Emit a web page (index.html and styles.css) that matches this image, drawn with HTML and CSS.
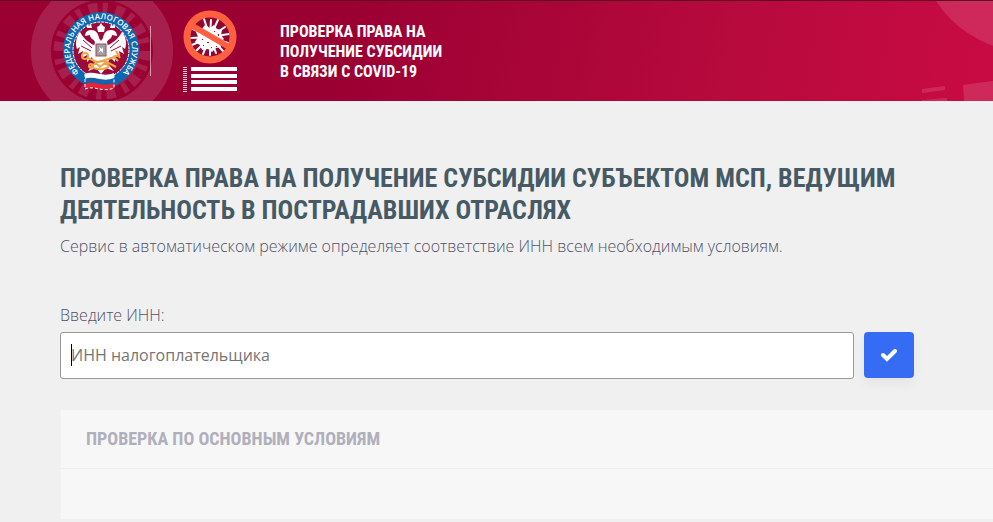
FILE: index.html
```
<!DOCTYPE html>
<html lang="ru">
<head>
    <meta charset="UTF-8">
    <meta name="viewport" content="width=device-width, initial-scale=1.0">
    <title>Проверка права на получение субсидии</title>
    <link rel="stylesheet" href="styles.css">
</head>
<body>
    <header class="header">
        <!-- Background shapes -->
        <svg class="decor decor-left" width="144" height="144" viewBox="0 0 144 144" aria-hidden="true">
            <g fill="none" stroke="#fff">
                <circle cx="72" cy="72" r="61" stroke-width="20"/>
                <circle cx="72" cy="72" r="43" stroke-width="11" stroke-dasharray="9 5 5 8"/>
            </g>
            <circle cx="72" cy="72" r="38" fill="#fff"/>
        </svg>
        <svg class="decor decor-right" width="80" height="100" viewBox="0 0 80 100" aria-hidden="true">
            <g fill="#fff">
                <circle cx="117" cy="-61" r="112"/>
                <path d="M9 88l23-3v4l-23 3zM9 99l25-2v3H9zM50 84l30-4v20H51z"/>
            </g>
        </svg>

        <svg class="emblem" width="84" height="84" viewBox="0 0 84 84" role="img" aria-label="Федеральная налоговая служба">
            <defs>
                <path id="ring" d="M18 62A31 31 0 1 1 64 62"/>
            </defs>
            <circle cx="41" cy="41" r="38" fill="#0b68b1"/>
            <circle cx="41" cy="41" r="28" fill="#9b0b39" stroke="#fff" stroke-dasharray="3 1"/>
            <text class="ring-text"><textPath href="#ring" startOffset="50%">ФЕДЕРАЛЬНАЯ НАЛОГОВАЯ СЛУЖБА</textPath></text>
            <!-- Eagle -->
            <g fill="#fff">
                <path d="M37 18l2-1 2-3 2 3 2 1-1 5h-6z"/>
                <path d="M35 33c-1-3-5-3-5-7l-5 1c0-4 3-6 6-6 5 0 7 3 8 8l2 3 2-3c1-5 3-8 8-8 3 0 6 2 6 6l-5-1c0 4-4 4-5 7l3 12-3 9 7 8-8-3-5 6-5-6-8 3 7-8-3-9z"/>
                <path d="M34 36c-5-2-10-6-14-13-4 5-5 12-3 17l3-2-2 7 5-3-1 7 5-3v7l5-5 2 6 3-8zM48 36c5-2 10-6 14-13 4 5 5 12 3 17l-3-2 2 7-5-3 1 7-5-3v7l-5-5-2 6-3-8z"/>
                <path d="M27 19v-4l2 2 2-2 1 4zM50 19l1-4 2 2 2-2v4z"/>
            </g>
            <path d="M23 31l9 8M21 37l10 5M59 31l-9 8M61 37l-10 5" stroke="#9b0b39"/>
            <rect x="36" y="35" width="10" height="12" fill="#9d9fa8" stroke="#a04b4b"/>
            <path d="M38 44l2-3-1-3 3 2 1-2v6l-2-2z" fill="#fff"/>
            <!-- Crossed keys -->
            <g fill="none" stroke="#efa545" stroke-width="2">
                <circle cx="25" cy="47" r="3"/>
                <path d="M28 49l9 4 8-1 11 6M30 58l8-5 14-4 8-4M56 42l4 7M53 47l5 5M33 58c2 3 14 3 16-1M36 54l4 4 5-4 4 3"/>
                <circle cx="31" cy="57" r="2"/>
            </g>
            <!-- Flag -->
            <path d="M25 65c10-4 17 4 29-1v6c-12 5-19-3-29 1z" fill="#fff"/>
            <path d="M25 70c10-4 17 4 29-1v6c-12 5-19-3-29 1z" fill="#1663ad"/>
            <path d="M25 75c10-4 17 4 29-1v5c-12 5-19-3-29 1z" fill="#e52335"/>
            <path d="M25 65v15c10-4 17 4 29-1V64" fill="none" stroke="#fff" stroke-dasharray="3 2"/>
        </svg>
        <span class="divider"></span>
        <svg class="virus" width="54" height="84" viewBox="0 0 54 84" aria-hidden="true">
            <circle cx="27" cy="28" r="24" fill="#8f0832"/>
            <g stroke="#fff" stroke-width="2" stroke-linecap="round">
                <path d="M27 28L21 10M27 28L28 11M27 28L35 11M27 28L42 18M27 28L46 25M27 28L45 34M27 28L40 42M27 28L33 44M27 28L27 46M27 28L20 45M27 28L13 42M27 28L9 36M27 28L8 29M27 28L10 20"/>
            </g>
            <path d="M22 16l5 3 4-3 3 4 5 1-1 5 3 4-4 3 1 5-5 1-4 4-4-3-6 1-2-5-5-3 3-5-2-5 5-2z" fill="#fff"/>
            <g class="spots">
                <path d="M31 22h1v1h-1zM24 33h2v1h-2zM28 38h1v1h-1zM35 25h1v2h-1zM19 30h1v1h-1zM33 37h1v1h-1zM20 36h1v1h-1z"/>
            </g>
            <path d="M8 16l38 22" stroke="#ff6140" stroke-width="6"/>
            <circle cx="27" cy="28" r="23" fill="none" stroke="#ff6140" stroke-width="7"/>
            <path d="M2 58v25" stroke="#f0c9d5" stroke-width="4" stroke-dasharray="1 1"/>
            <path d="M8 60h46M8 67h46M8 73h46M8 80h46" stroke="#fff" stroke-width="4"/>
        </svg>
        <div class="header-title">Проверка права на<br>получение субсидии<br>в связи с COVID-19</div>
    </header>

    <main class="content">
        <h1>Проверка права на получение субсидии субъектом МСП, ведущим деятельность в пострадавших отраслях</h1>
        <p class="lead">Сервис в автоматическом режиме определяет соответствие ИНН всем необходимым условиям.</p>

        <form class="inn-form">
            <label for="inn">Введите ИНН:</label>
            <div class="inn-row">
                <div class="inn-field">
                    <input type="text" id="inn" placeholder="ИНН налогоплательщика">
                </div>
                <button type="button" aria-label="Проверить">
                    <svg width="18" height="14" viewBox="0 0 18 14" aria-hidden="true">
                        <path d="M3 7l4 4 8-8" fill="none" stroke="#fff" stroke-width="4" stroke-linecap="round"/>
                    </svg>
                </button>
            </div>
        </form>

        <section class="panel">
            <h2>Проверка по основным условиям</h2>
            <div class="panel-body"></div>
        </section>
    </main>
</body>
</html>
```
FILE: styles.css
```
* {
    margin: 0;
    padding: 0;
    box-sizing: border-box;
}

body {
    background: #f0f0f0;
    color: #50506a;
    font-family: 'Open Sans', 'Noto Sans', sans-serif;
    font-size: 16px;
    font-weight: 300;
    line-height: 24px;
}

.header {
    position: relative;
    display: flex;
    align-items: center;
    padding: 8px 60px;
    border-top: 1px solid #5c0a26;
    background: linear-gradient(100deg, #9b0033 35%, #b80a3d 75%, #c90b43);
    overflow: hidden;
}

.decor {
    position: absolute;
    opacity: 0.12;
}

.decor-left {
    left: 30px;
    top: -22px;
}

.decor-right {
    right: 0;
    top: 0;
}

.emblem,
.virus {
    position: relative;
    flex: none;
}

.ring-text {
    font-family: 'Open Sans', sans-serif;
    font-size: 8px;
    font-weight: 600;
    fill: #fff;
    text-anchor: middle;
}

.spots {
    fill: #9b0b39;
}

.divider {
    width: 1px;
    height: 50px;
    margin: 0 32px 0 6px;
    background: #d58ba2;
}

.header-title,
h1,
h2 {
    font-family: 'Roboto Condensed', 'Liberation Sans Narrow', Roboto, sans-serif;
    font-weight: 700;
    text-transform: uppercase;
}

.header-title {
    margin: 2px 0 0 43px;
    color: #fff;
    font-size: 16px;
    line-height: 20px;
}

.content {
    padding: 61px 0 0 60px;
}

h1 {
    max-width: 860px;
    color: #455a64;
    font-size: 26px;
    line-height: 32px;
}

.lead {
    margin-top: 8px;
}

.inn-form {
    max-width: 854px;
    margin-top: 45px;
}

.inn-form label {
    display: block;
    margin-bottom: 5px;
}

.inn-row {
    display: flex;
    gap: 10px;
}

.inn-field {
    position: relative;
    flex: 1;
}

/* Text cursor */
.inn-field::before {
    content: '';
    position: absolute;
    left: 11px;
    top: 12px;
    width: 1px;
    height: 22px;
    background: #000;
}

input {
    display: block;
    width: 100%;
    height: 47px;
    padding: 0 10px 2px;
    border: 1px solid #999;
    border-radius: 3px;
    background: #fff;
    font: 400 16px 'Open Sans', 'Noto Sans', sans-serif;
    outline: none;
}

input::placeholder {
    color: #757575;
}

button {
    display: flex;
    align-items: center;
    justify-content: center;
    width: 50px;
    height: 46px;
    border: none;
    border-radius: 4px;
    background: #366cf3;
    box-shadow: 0 6px 12px rgba(0, 0, 0, 0.05);
    cursor: pointer;
}

.panel {
    margin-top: 31px;
    border-left: 1px solid #f3f3f3;
    background: #f7f7f7;
}

h2 {
    padding: 17px 25px;
    border-bottom: 1px solid #f0f0f0;
    color: #b0b0bc;
    font-size: 18px;
    line-height: 24px;
}

.panel-body {
    height: 50px;
}
```
